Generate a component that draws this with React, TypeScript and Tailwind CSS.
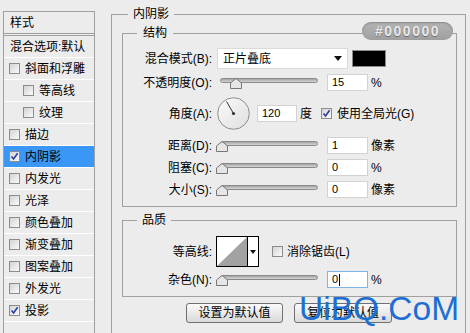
import React from "react"

function Check({ on }: { on?: boolean }) {
  return (
    <span className="flex h-[11px] w-[11px] shrink-0 items-center justify-center border border-[#8c8c8c] bg-linear-to-br from-[#d4d4d4] to-[#fafafa]">
      {on && (
        <svg width="9" height="9" viewBox="0 0 9 9">
          <path d="M1.5 4.5 L3.6 7 L7.6 1.2" fill="none" stroke="#2b3d9e" strokeWidth="1.6" />
        </svg>
      )}
    </span>
  )
}

function Slider({ thumb }: { thumb: string }) {
  return (
    <div className="relative ml-[4px] h-[17px] w-[104px] shrink-0">
      <div className="absolute left-[4px] top-[4px] h-[5px] w-[98px] rounded-full border border-[#8a8a8a] bg-linear-to-b from-[#a4a4a4] to-[#d6d6d6]" />
      <svg className={"absolute top-[4px] " + thumb} width="12" height="11" viewBox="0 0 12 11">
        <path d="M6 0.5 L11.5 5 V10.5 H0.5 V5 Z" fill="#e6e6e6" stroke="#777" />
      </svg>
    </div>
  )
}

function Field({ value, focus }: { value: string; focus?: boolean }) {
  return (
    <div
      className={
        "ml-[7px] flex h-[17px] w-[41px] shrink-0 items-center border bg-white pl-[4px] text-[11px] " +
        (focus ? "border-[#7eb4ea]" : "border-[#d2d2d2]")
      }
    >
      {value}
      {focus && <span className="ml-px h-[12px] w-px bg-black" />}
    </div>
  )
}

function Label({ children }: { children: React.ReactNode }) {
  return <div className="w-[89px] shrink-0 text-right whitespace-nowrap">{children}</div>
}

const styles = [
  { t: "斜面和浮雕" },
  { t: "等高线", sub: true },
  { t: "纹理", sub: true },
  { t: "描边" },
  { t: "内阴影", on: true, sel: true },
  { t: "内发光" },
  { t: "光泽" },
  { t: "颜色叠加" },
  { t: "渐变叠加" },
  { t: "图案叠加" },
  { t: "外发光" },
  { t: "投影", on: true },
]

export default function App() {
  return (
    <div className="relative flex h-[333px] w-[470px] overflow-hidden bg-[#ececec] font-['Liberation_Sans','Noto_Sans_CJK_SC',sans-serif] text-[12px] text-black">
      {/* left list */}
      <aside className="ml-[3px] mt-[11px] w-[92px] shrink-0 self-stretch border-x border-t border-[#a0a0a0]">
        <div className="flex h-[22px] items-center border-b border-[#a0a0a0] pl-[6px]">样式</div>
        <div className="mt-[1px] border-t border-[#a0a0a0]">
          <div className="flex h-[22px] items-center border-b border-white pl-[6px] whitespace-nowrap">混合选项:默认</div>
          {styles.map((s) => (
            <div
              key={s.t}
              className={
                "flex h-[22px] items-center gap-[5px] border-b border-white " +
                (s.sub ? "pl-[19px] " : "pl-[5px] ") +
                (s.sel ? "bg-[#3a97f6]" : "")
              }
            >
              <Check on={s.on} />
              <span>{s.t}</span>
            </div>
          ))}
        </div>
      </aside>

      {/* right settings */}
      <fieldset className="ml-[16px] mt-[6px] h-[345px] w-[355px] shrink-0 border border-[#a0a0a0]">
        <legend className="ml-[16px] px-[5px] leading-[16px]">内阴影</legend>

        <fieldset className="ml-[10px] mt-[3px] w-[335px] border border-[#a0a0a0] pb-[8px]">
          <legend className="ml-[14px] px-[6px] leading-[16px]">结构</legend>

          <div className="mt-[7px] flex h-[21px] items-center">
            <Label>混合模式(B):</Label>
            <div className="ml-[5px] flex h-[21px] w-[131px] shrink-0 items-center justify-between border border-[#dadada] bg-white pl-[5px] pr-[5px]">
              <span>正片叠底</span>
              <svg width="8" height="5" viewBox="0 0 8 5">
                <path d="M0 0 H8 L4 5 Z" fill="#111" />
              </svg>
            </div>
            <div className="ml-[4px] h-[17px] w-[34px] shrink-0 border border-[#8a8a8a] bg-black" />
          </div>

          <div className="mt-[5px] flex h-[17px] items-center">
            <Label>不透明度(O):</Label>
            <Slider thumb="left-[14px]" />
            <Field value="15" />
            <span className="ml-[3px]">%</span>
          </div>

          <div className="mt-[6px] flex h-[33px] items-center">
            <Label>角度(A):</Label>
            <svg className="ml-[5px] shrink-0" width="33" height="33" viewBox="0 0 33 33">
              <defs>
                <linearGradient id="dial" x1="0" y1="0" x2="1" y2="1">
                  <stop offset="0" stopColor="#fbfbfb" />
                  <stop offset="1" stopColor="#dedede" />
                </linearGradient>
              </defs>
              <circle cx="16.5" cy="16.5" r="15.8" fill="url(#dial)" stroke="#8e8e8e" />
              <line x1="16.5" y1="16.5" x2="9.5" y2="4.4" stroke="#333" strokeWidth="1" />
              <circle cx="16.5" cy="16.5" r="1.6" fill="#333" />
            </svg>
            <div className="ml-[7px] flex h-[17px] w-[40px] shrink-0 items-center border border-[#d2d2d2] bg-white pl-[4px] text-[11px]">120</div>
            <span className="ml-[3px]">度</span>
            <span className="ml-[9px]">
              <Check on />
            </span>
            <span className="ml-[5px] whitespace-nowrap">使用全局光(G)</span>
          </div>

          <div className="mt-[7px] flex h-[17px] items-center">
            <Label>距离(D):</Label>
            <Slider thumb="left-0" />
            <Field value="1" />
            <span className="ml-[3px]">像素</span>
          </div>

          <div className="mt-[5px] flex h-[17px] items-center">
            <Label>阻塞(C):</Label>
            <Slider thumb="left-0" />
            <Field value="0" />
            <span className="ml-[3px]">%</span>
          </div>

          <div className="mt-[5px] flex h-[17px] items-center">
            <Label>大小(S):</Label>
            <Slider thumb="left-0" />
            <Field value="0" />
            <span className="ml-[3px]">像素</span>
          </div>
        </fieldset>

        <fieldset className="ml-[10px] mt-[5px] w-[335px] border border-[#a0a0a0] pb-[8px]">
          <legend className="ml-[14px] px-[5px] leading-[16px]">品质</legend>

          <div className="mt-[8px] flex h-[31px] items-center">
            <Label>等高线:</Label>
            <div className="ml-[4px] flex h-[31px] w-[43px] shrink-0 border border-black bg-white">
              <svg width="30" height="29" viewBox="0 0 30 29">
                <path d="M0 29 L30 0 V29 Z" fill="#a2a2a2" />
              </svg>
              <div className="flex flex-1 items-center justify-center border-l border-black">
                <svg width="6" height="4" viewBox="0 0 6 4">
                  <path d="M0 0 H6 L3 4 Z" fill="#111" />
                </svg>
              </div>
            </div>
            <span className="ml-[13px]">
              <Check />
            </span>
            <span className="ml-[4px] whitespace-nowrap">消除锯齿(L)</span>
          </div>

          <div className="mt-[4px] flex h-[17px] items-center">
            <Label>杂色(N):</Label>
            <Slider thumb="left-0" />
            <Field value="0" focus />
            <span className="ml-[3px]">%</span>
          </div>
        </fieldset>

        <div className="ml-[74px] mt-[6px] flex gap-[11px]">
          <button className="h-[20px] w-[97px] rounded-[3px] border border-[#707070] bg-linear-to-b from-[#fbfbfb] to-[#d9d9d9] leading-none">
            设置为默认值
          </button>
          <button className="h-[20px] w-[98px] rounded-[3px] border border-[#707070] bg-linear-to-b from-[#fbfbfb] to-[#d9d9d9] leading-none">
            复位为默认值
          </button>
        </div>
      </fieldset>

      {/* colour code badge */}
      <div className="absolute left-[362px] top-[22px] flex h-[18px] w-[91px] items-center justify-center rounded-full bg-linear-to-b from-[#b4b4b4] to-[#a0a0a0] text-[14px] font-bold tracking-[1.5px] text-[#e9e9e9] shadow-[inset_0_1px_2px_rgba(0,0,0,0.25)] [text-shadow:0_1px_1px_#6a6a6a]">
        #000000
      </div>

      {/* watermark */}
      <div className="absolute left-[299px] top-[292px] text-[33.5px] leading-none text-[#1d6fd3]">UiBQ.CoM</div>
    </div>
  )
}
